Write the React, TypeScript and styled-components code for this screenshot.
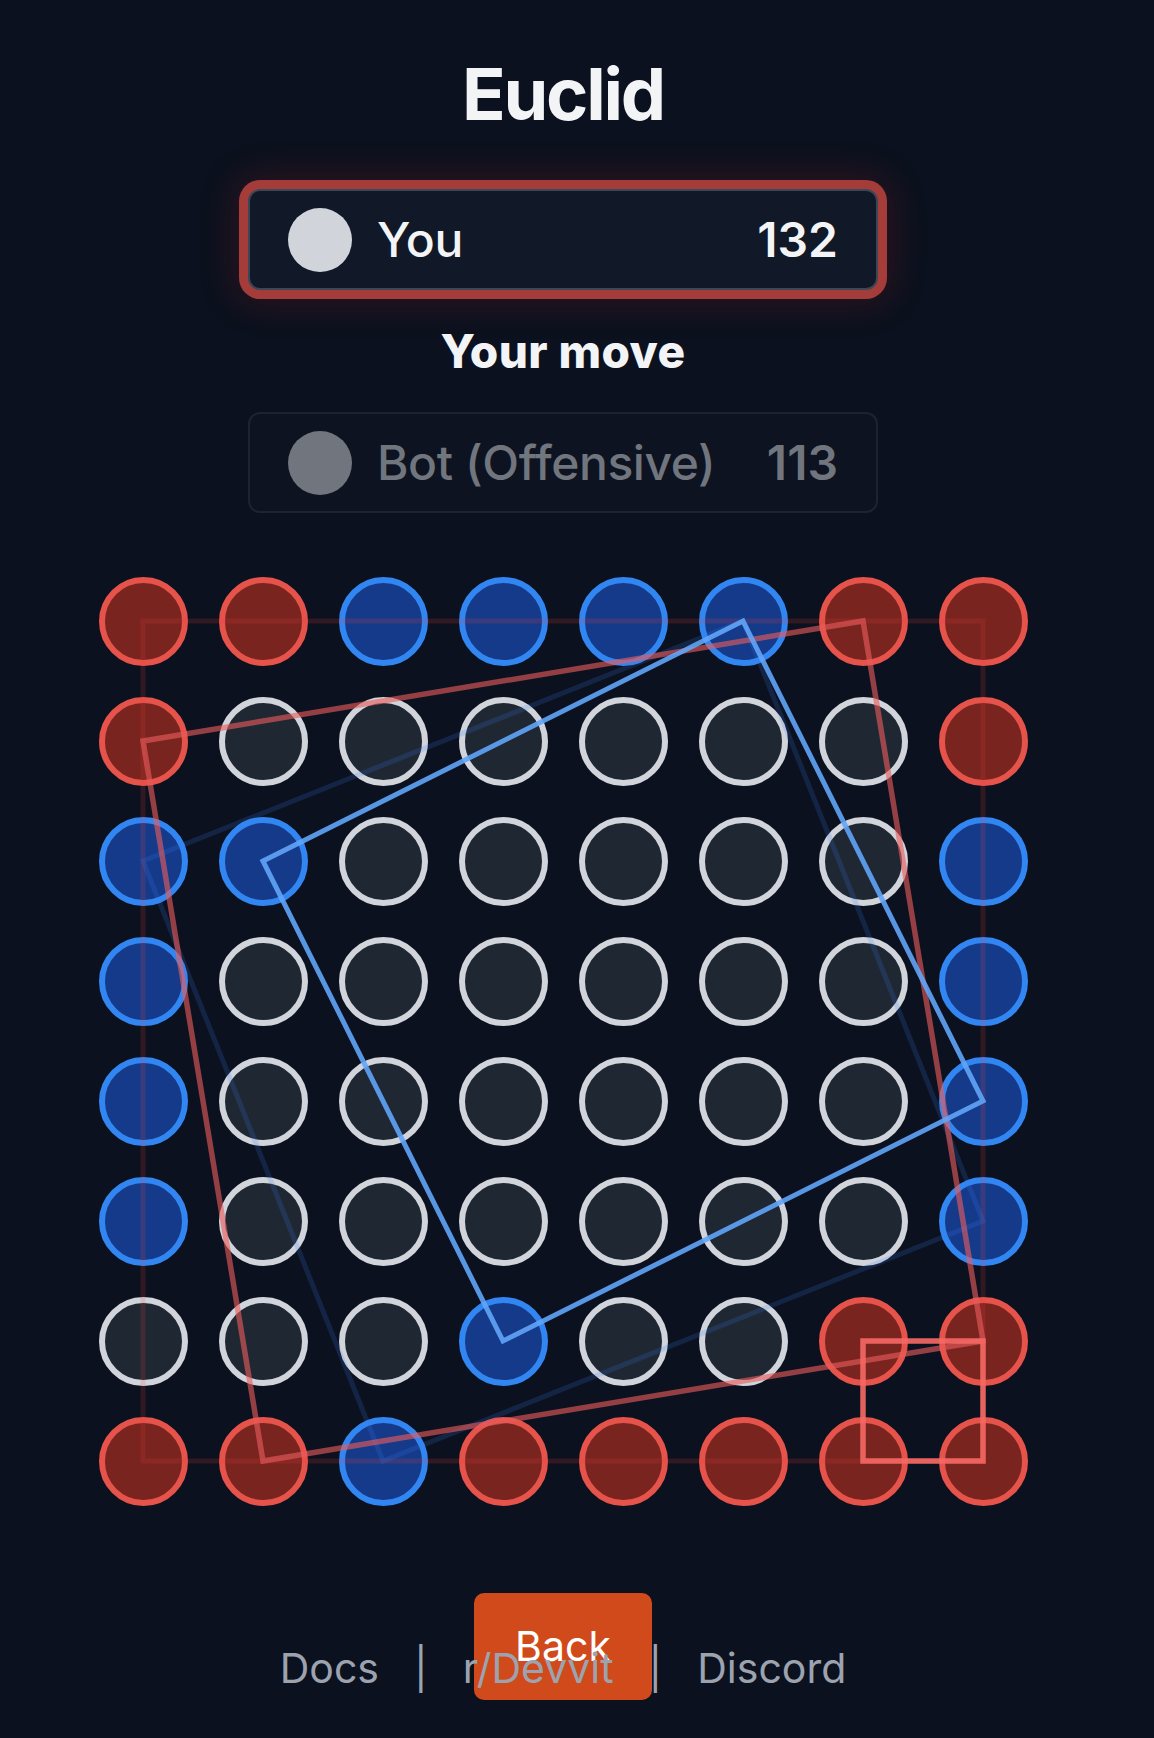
import React from "react";
import styled, { createGlobalStyle, css } from "styled-components";

const GlobalStyle = createGlobalStyle`
  html, body {
    margin: 0;
    padding: 0;
    background: #0b111e;
  }
  body {
    font-family: Inter, "Noto Sans", "Liberation Sans", sans-serif;
    color: #f3f4f6;
  }
  * { box-sizing: border-box; }
`;

const Page = styled.main`
  position: relative;
  width: calc(100% - 28px);
  min-height: 100vh;
  padding-top: 58px;
  display: flex;
  flex-direction: column;
  align-items: center;
`;

const Title = styled.h1`
  margin: 0;
  font-size: 72px;
  line-height: 72px;
  font-weight: 700;
  color: #f3f4f6;
  letter-spacing: -2.2px;
`;

const PlayerCard = styled.div<{ $active?: boolean; $gap: number }>`
  margin-top: ${(p) => p.$gap}px;
  width: 630px;
  height: 101px;
  border-radius: 12px;
  padding: 0 38px;
  display: flex;
  align-items: center;
  gap: 25px;
  ${(p) =>
    p.$active
      ? css`
          background: #111827;
          border: 2px solid #3b4657;
          box-shadow: 0 0 0 9px #a43c3a, 0 0 36px 14px rgba(200, 40, 40, 0.18);
        `
      : css`
          background: #0d1320;
          border: 2px solid #1d2431;
        `}
`;

const PlayerDot = styled.span<{ $active?: boolean }>`
  flex: none;
  width: 64px;
  height: 64px;
  border-radius: 50%;
  background: ${(p) => (p.$active ? "#d1d5db" : "#71757d")};
`;

const PlayerName = styled.span<{ $active?: boolean }>`
  flex: 1;
  font-size: 48px;
  line-height: 1;
  font-weight: 500;
  letter-spacing: -0.4px;
  color: ${(p) => (p.$active ? "#f3f4f6" : "#70757e")};
  white-space: nowrap;
`;

const PlayerScore = styled.span<{ $active?: boolean }>`
  font-size: 48px;
  line-height: 1;
  font-weight: 600;
  color: ${(p) => (p.$active ? "#f3f4f6" : "#70757e")};
`;

const Status = styled.div`
  margin-top: 39px;
  font-size: 46px;
  line-height: 45px;
  font-weight: 800;
  color: #f3f4f6;
  letter-spacing: 0.4px;
`;

const Board = styled.div`
  position: relative;
  margin-top: 48px;
  display: grid;
  grid-template-columns: repeat(8, 120px);
  grid-template-rows: repeat(8, 120px);
`;

const Cell = styled.div`
  display: flex;
  align-items: center;
  justify-content: center;
`;

const dotColors = {
  R: { fill: "#79241f", ring: "#e5534b" },
  B: { fill: "#153a8a", ring: "#3286f2" },
  E: { fill: "#1f2733", ring: "#d1d5db" },
} as const;

type Owner = keyof typeof dotColors;

const Dot = styled.div<{ $owner: Owner }>`
  width: 89px;
  height: 89px;
  border-radius: 50%;
  background: ${(p) => dotColors[p.$owner].fill};
  border: 6px solid ${(p) => dotColors[p.$owner].ring};
`;

const Overlay = styled.svg`
  position: absolute;
  inset: 0;
  width: 960px;
  height: 960px;
  pointer-events: none;
`;

const BackButton = styled.button`
  margin-top: 72px;
  width: 178px;
  height: 107px;
  border: none;
  border-radius: 10px;
  background: #d04a1b;
  color: #ffffff;
  font-family: inherit;
  font-size: 41px;
  line-height: 1;
  font-weight: 400;
  display: flex;
  align-items: center;
  justify-content: center;
  padding: 0;
`;

const Links = styled.nav`
  position: absolute;
  left: 0;
  right: 0;
  bottom: 49px;
  display: flex;
  justify-content: center;
  align-items: center;
  gap: 35px;
  font-size: 41px;
  line-height: 41px;
  color: #9ca3af;
  z-index: 1;
`;

const LinkText = styled.a`
  color: inherit;
  text-decoration: none;
`;

const Sep = styled.span`
  color: #9ca3af;
`;

const grid: Owner[][] = [
  ["R", "R", "B", "B", "B", "B", "R", "R"],
  ["R", "E", "E", "E", "E", "E", "E", "R"],
  ["B", "B", "E", "E", "E", "E", "E", "B"],
  ["B", "E", "E", "E", "E", "E", "E", "B"],
  ["B", "E", "E", "E", "E", "E", "E", "B"],
  ["B", "E", "E", "E", "E", "E", "E", "B"],
  ["E", "E", "E", "B", "E", "E", "R", "R"],
  ["R", "R", "B", "R", "R", "R", "R", "R"],
];

const squares: { pts: [number, number][]; color: string; width: number }[] = [
  { pts: [[0, 0], [7, 0], [7, 7], [0, 7]], color: "rgba(239, 68, 68, 0.17)", width: 5 },
  { pts: [[0, 2], [5, 0], [7, 5], [2, 7]], color: "rgba(59, 130, 246, 0.18)", width: 5 },
  { pts: [[0, 1], [6, 0], [7, 6], [1, 7]], color: "rgba(232, 92, 92, 0.62)", width: 5.5 },
  { pts: [[1, 2], [5, 0], [7, 4], [3, 6]], color: "rgba(96, 165, 250, 0.9)", width: 5 },
  { pts: [[6, 6], [7, 6], [7, 7], [6, 7]], color: "rgba(244, 104, 100, 0.92)", width: 5.5 },
];

const c = (i: number) => 60 + i * 120;

export default function App() {
  return (
    <>
      <GlobalStyle />
      <Page>
        <Title>Euclid</Title>
        <PlayerCard $active $gap={59}>
          <PlayerDot $active />
          <PlayerName $active>You</PlayerName>
          <PlayerScore $active>132</PlayerScore>
        </PlayerCard>
        <Status>Your move</Status>
        <PlayerCard $gap={38}>
          <PlayerDot />
          <PlayerName>Bot (Offensive)</PlayerName>
          <PlayerScore>113</PlayerScore>
        </PlayerCard>
        <Board>
          {grid.map((row, r) =>
            row.map((o, col) => (
              <Cell key={`${r}-${col}`}>
                <Dot $owner={o} />
              </Cell>
            ))
          )}
          <Overlay viewBox="0 0 960 960">
            {squares.map((s, i) => (
              <polygon
                key={i}
                points={s.pts.map(([x, y]) => `${c(x)},${c(y)}`).join(" ")}
                fill="none"
                stroke={s.color}
                strokeWidth={s.width}
                strokeLinejoin="miter"
              />
            ))}
          </Overlay>
        </Board>
        <BackButton>Back</BackButton>
        <Links>
          <LinkText>Docs</LinkText>
          <Sep>|</Sep>
          <LinkText>r/Devvit</LinkText>
          <Sep>|</Sep>
          <LinkText>Discord</LinkText>
        </Links>
      </Page>
    </>
  );
}
